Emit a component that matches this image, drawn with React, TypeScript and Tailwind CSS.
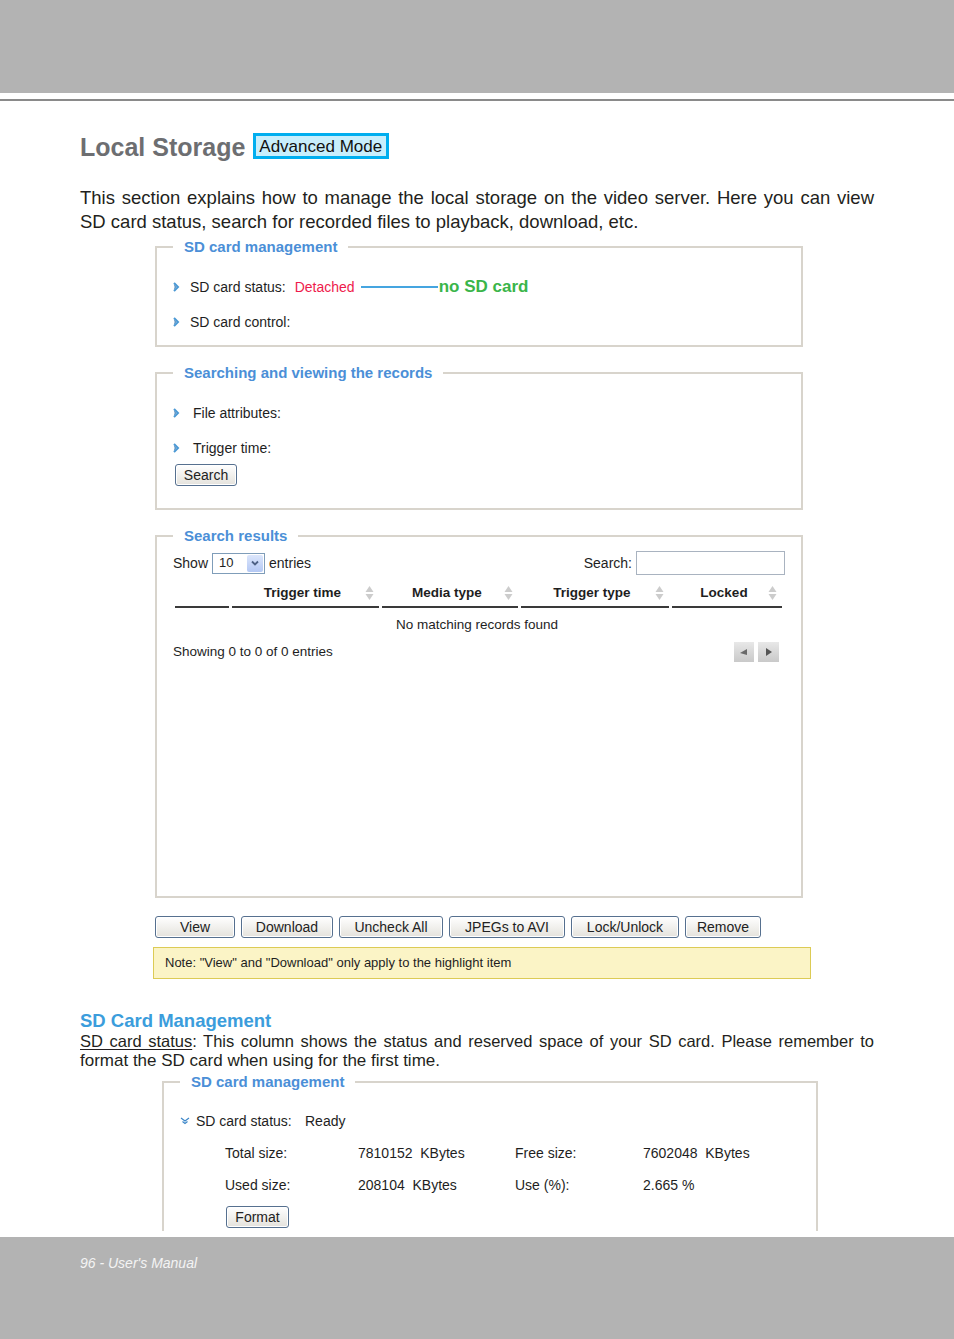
import React from "react";
import clsx from "clsx";

const Chevron = () => (
  <svg width="7" height="10" viewBox="0 0 7 10" className="shrink-0">
    <path d="M1 1 5 5 1 9" fill="none" stroke="#4a98d4" strokeWidth="2" />
    <path d="M1 3.5 2.8 5 1 6.5" fill="none" stroke="#2a6fae" strokeWidth="1" />
  </svg>
);

const ChevronDown = () => (
  <svg width="10" height="8" viewBox="0 0 10 8" className="shrink-0">
    <path d="M1 1l4 3 4-3M2.5 4.5 5 6.5l2.5-2" fill="none" stroke="#3d87c9" strokeWidth="1.2" />
  </svg>
);

const SortIcon = () => (
  <svg width="9" height="16" viewBox="0 0 9 16">
    <path d="M4.5 1 8.5 7h-8z" fill="#cccccc" />
    <path d="M4.5 15 .5 9h8z" fill="#cccccc" />
  </svg>
);

function Btn({
  children,
  className,
}: {
  children: React.ReactNode;
  className?: string;
}) {
  return (
    <button
      className={clsx(
        "h-[22px] rounded-[3px] border border-[#56708f] bg-linear-to-b from-white to-[#e4e2dc] text-[14px] leading-none text-[#222] shadow-[inset_0_0_0_1px_#ffffff]",
        className,
      )}
    >
      {children}
    </button>
  );
}

const legendCls =
  "ml-[16px] px-[11px] text-[15px] font-bold leading-[18px] text-[#4b8fd7]";
const fieldsetCls = "w-[648px] border-2 border-[#d8d4cc] ml-[155px]";

const columns = [
  { label: "", w: "w-[54px]", sort: false },
  { label: "Trigger time", w: "w-[147px]", sort: true },
  { label: "Media type", w: "w-[136px]", sort: true },
  { label: "Trigger type", w: "w-[148px]", sort: true },
  { label: "Locked", w: "w-[110px]", sort: true },
];

export default function App() {
  return (
    <div className="w-[954px] bg-white font-[Liberation_Sans,Arial,sans-serif] text-[#231f20]">
      <div className="h-[93px] bg-[#b3b3b3]" />
      <div className="mt-[6px] h-[2px] bg-[#8a8a8a]" />

      <div className="h-[1136px] overflow-hidden">
        {/* page intro */}
        <div className="ml-[80px] mt-[31px] flex h-[30px] items-center">
          <h1 className="text-[25px] font-bold leading-[30px] text-[#6d6e71]">
            Local Storage
          </h1>
          <span className="ml-[8px] mt-[-2px] flex h-[26px] w-[136px] items-center border-[3px] border-[#00aeef] bg-[#c8eefc] pl-[3px] text-[17px] leading-none text-[#111]">
            Advanced Mode
          </span>
        </div>
        <div className="ml-[80px] mt-[24px] w-[794px] text-[18.5px] leading-[24px]">
          <div className="text-justify [text-align-last:justify]">
            This section explains how to manage the local storage on the video
            server. Here you can view
          </div>
          <div>
            SD card status, search for recorded files to playback, download,
            etc.
          </div>
        </div>

        {/* SD card management */}
        <fieldset className={clsx(fieldsetCls, "mt-[4px]")}>
          <legend className={legendCls}>SD card management</legend>
          <div className="px-[16px] pb-[13px] pt-[21px] text-[14px] text-[#1e1e1e]">
            <div className="flex h-[20px] items-center">
              <Chevron />
              <span className="ml-[10px]">SD card status:</span>
              <span className="ml-[9px] text-[#ee1b4c]">Detached</span>
              <span className="ml-[6px] h-[2px] w-[77px] bg-[#45a5e0]" />
              <span className="ml-[1px] text-[17px] font-bold text-[#3ab54a]">
                no SD card
              </span>
            </div>
            <div className="mt-[15px] flex h-[20px] items-center">
              <Chevron />
              <span className="ml-[10px]">SD card control:</span>
            </div>
          </div>
        </fieldset>

        {/* Searching */}
        <fieldset className={clsx(fieldsetCls, "mt-[17px]")}>
          <legend className={legendCls}>
            Searching and viewing the records
          </legend>
          <div className="px-[16px] pb-[22px] pt-[21px] text-[14px] text-[#1e1e1e]">
            <div className="flex h-[20px] items-center">
              <Chevron />
              <span className="ml-[13px]">File attributes:</span>
            </div>
            <div className="mt-[15px] flex h-[20px] items-center">
              <Chevron />
              <span className="ml-[13px]">Trigger time:</span>
            </div>
            <Btn className="ml-[2px] mt-[6px] h-[21px] w-[62px]">Search</Btn>
          </div>
        </fieldset>

        {/* Search results */}
        <fieldset className={clsx(fieldsetCls, "mt-[17px]")}>
          <legend className={legendCls}>Search results</legend>
          <div className="h-[351px] px-[16px] pt-[6px] text-[14px] text-[#1e1e1e]">
            <div className="flex h-[24px] items-center justify-between">
              <div className="flex items-center">
                <span>Show</span>
                <div className="ml-[4px] flex h-[21px] w-[53px] items-center border border-[#7f9db9] bg-white">
                  <span className="ml-[6px] flex-1 text-[13px]">10</span>
                  <span className="mr-[1px] flex h-[17px] w-[16px] items-center justify-center rounded-[2px] bg-linear-to-b from-[#dce6fb] to-[#b4c8f4]">
                    <svg width="8" height="6" viewBox="0 0 8 6">
                      <path d="M1 1.5 4 4.5 7 1.5" fill="none" stroke="#4d6185" strokeWidth="1.8" />
                    </svg>
                  </span>
                </div>
                <span className="ml-[4px]">entries</span>
              </div>
              <div className="flex items-center">
                <span>Search:</span>
                <div className="ml-[4px] h-[24px] w-[149px] border border-[#a9b3c0] bg-white" />
              </div>
            </div>

            <div className="ml-[2px] mt-[5px] flex gap-[3px]">
              {columns.map((c, i) => (
                <div
                  key={i}
                  className={clsx(
                    "relative flex h-[28px] items-center justify-center border-b-2 border-[#3a3a3a] pr-[6px] text-[13.5px] font-bold",
                    c.w,
                  )}
                >
                  {c.label}
                  {c.sort && (
                    <span className="absolute right-[5px] top-[5px]">
                      <SortIcon />
                    </span>
                  )}
                </div>
              ))}
            </div>
            <div className="flex h-[34px] items-center justify-center pr-[4px] text-[13.5px]">
              No matching records found
            </div>
            <div className="flex h-[20px] items-center justify-between text-[13.5px]">
              <span>Showing 0 to 0 of 0 entries</span>
              <div className="mr-[6px] flex gap-[4px]">
                <span className="flex h-[20px] w-[20px] items-center justify-center bg-linear-to-b from-[#e8e8e8] to-[#c9c9c9]">
                  <svg width="8" height="6" viewBox="0 0 8 6">
                    <path d="M0 4 7 0v6z" fill="#6a6a6a" />
                  </svg>
                </span>
                <span className="flex h-[20px] w-[21px] items-center justify-center bg-linear-to-b from-[#e8e8e8] to-[#c9c9c9]">
                  <svg width="7" height="8" viewBox="0 0 7 8">
                    <path d="M1 0 7 4 1 8z" fill="#555" />
                  </svg>
                </span>
              </div>
            </div>
          </div>
        </fieldset>

        <div className="ml-[155px] mt-[18px] flex gap-[6px]">
          <Btn className="w-[80px]">View</Btn>
          <Btn className="w-[92px]">Download</Btn>
          <Btn className="w-[104px]">Uncheck All</Btn>
          <Btn className="w-[116px]">JPEGs to AVI</Btn>
          <Btn className="w-[108px]">Lock/Unlock</Btn>
          <Btn className="w-[76px]">Remove</Btn>
        </div>
        <div className="ml-[153px] mt-[9px] flex h-[32px] w-[658px] items-center border border-[#dccb55] bg-[#fbf4c6] pl-[11px] text-[13px] text-[#1e1e1e]">
          Note: "View" and "Download" only apply to the highlight item
        </div>

        {/* SD Card Management description */}
        <h2 className="ml-[80px] mt-[31px] text-[18.5px] font-bold leading-[22px] text-[#3b9ddc]">
          SD Card Management
        </h2>
        <div className="ml-[80px] w-[794px] text-[16.5px] leading-[19px]">
          <div className="whitespace-nowrap text-justify [text-align-last:justify]">
            <span className="underline underline-offset-2">SD card status</span>
            : This column shows the status and reserved space of your SD card.
            Please remember to
          </div>
          <div className="text-[17px]">format the SD card when using for the first time.</div>
        </div>

        <fieldset className="ml-[162px] mt-[2px] h-[159px] w-[656px] border-2 border-b-0 border-[#d8d4cc]">
          <legend className="ml-[16px] px-[11px] text-[15px] font-bold leading-[20px] text-[#4b8fd7]">
            SD card management
          </legend>
          <div className="pl-[16px] pt-[19px] text-[14px] text-[#1e1e1e]">
            <div className="flex h-[20px] items-center">
              <ChevronDown />
              <span className="ml-[6px] w-[109px]">SD card status:</span>
              <span>Ready</span>
            </div>
            <div className="ml-[45px] mt-[12px] grid h-[20px] grid-cols-[133px_157px_128px_1fr] items-center">
              <span>Total size:</span>
              <span>7810152&nbsp; KBytes</span>
              <span>Free size:</span>
              <span>7602048&nbsp; KBytes</span>
            </div>
            <div className="ml-[45px] mt-[12px] grid h-[20px] grid-cols-[133px_157px_128px_1fr] items-center">
              <span>Used size:</span>
              <span>208104&nbsp; KBytes</span>
              <span>Use (%):</span>
              <span>2.665 %</span>
            </div>
            <Btn className="ml-[46px] mt-[11px] w-[63px]">Format</Btn>
          </div>
        </fieldset>
      </div>

      <div className="h-[102px] bg-[#b3b3b3] pl-[80px] pt-[14px]">
        <span className="text-[14px] italic leading-[18px] text-[#f4f4f4]">
          96 - User's Manual
        </span>
      </div>
    </div>
  );
}
